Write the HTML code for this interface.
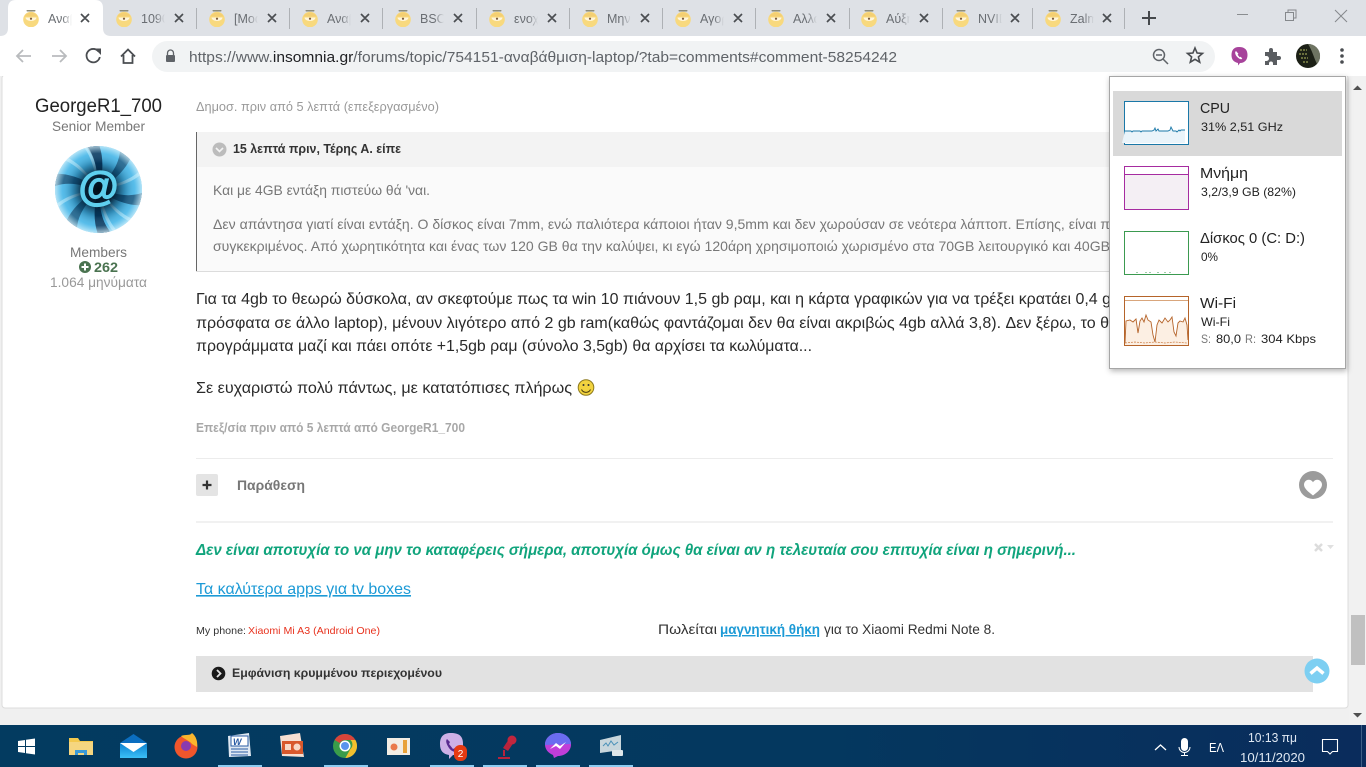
<!DOCTYPE html>
<html lang="el"><head><meta charset="utf-8"><title>Αναβάθμιση laptop</title>
<style>
html,body{margin:0;padding:0;width:1366px;height:767px;overflow:hidden;background:#fff}
svg{display:block;position:absolute;left:0;top:0}
text{font-family:"Liberation Sans","DejaVu Sans",sans-serif}
</style></head><body>
<svg width="1366" height="767" viewBox="0 0 1366 767" xmlns="http://www.w3.org/2000/svg">
<defs>
<symbol id="fav" viewBox="0 0 16 18"><circle cx="8" cy="10.500" r="7.800" fill="#f8d97e"/><path d="M1.500 7.500a7 6 0 0 1 13 0z" fill="#f4cf72"/><rect x="3.500" y="1" width="9" height="1.500" rx=".7" fill="#8d8d7c"/><path d="M2.500 8.500h11a5.500 3.500 0 0 1-11 0z" fill="#fff6dc"/><circle cx="8" cy="9.700" r="1.100" fill="#7a5a3a"/></symbol>
<linearGradient id="fd"><stop offset="0" stop-color="#dee1e6" stop-opacity="0"/><stop offset="1" stop-color="#dee1e6"/></linearGradient>
<linearGradient id="fw"><stop offset="0" stop-color="#fff" stop-opacity="0"/><stop offset="1" stop-color="#fff"/></linearGradient>
<linearGradient id="tb" x1="0" x2="1" y1="0" y2="0"><stop offset="0" stop-color="#033b60"/><stop offset=".6" stop-color="#04385f"/><stop offset="1" stop-color="#0a2c5c"/></linearGradient>
<linearGradient id="mail" x1="0" x2="0" y1="0" y2="1"><stop offset="0" stop-color="#0a7fd0"/><stop offset="1" stop-color="#3cc0f8"/></linearGradient>
<radialGradient id="avc"><stop offset="0" stop-color="#010c16"/><stop offset=".34" stop-color="#031c30" stop-opacity=".95"/><stop offset=".6" stop-color="#06324f" stop-opacity=".3"/><stop offset=".82" stop-color="#bfeeff" stop-opacity=".15"/><stop offset="1" stop-color="#e6f9ff" stop-opacity=".75"/></radialGradient>
<clipPath id="avclip"><circle cx="98.500" cy="189.500" r="43.500"/></clipPath>
<path id="arm" d="M0 0C12 -8 30 -14 36 -36L48 -28C38 -10 16 -2 0 0z"/>
<path id="str" d="M6 -3C18 -9 36 -18 44 -36L47 -34C38 -15 20 -6 6 -3z"/>
</defs>

<!-- page background -->
<rect width="1366" height="767" fill="#f0f0f0"/>
<rect x="2" y="75" width="1346" height="633" rx="3" fill="#fff" stroke="#dcdcdc"/>

<!-- chrome tab strip -->
<rect width="1366" height="36" fill="#dee1e6"/>
<rect y="36" width="1366" height="40" fill="#fff"/>
<path d="M0 36q8 0 8-8V8q0-8 8-8h79q8 0 8 8v20q0 8 8 8z" fill="#fff"/>
<g fill="#aeb1b5"><rect x="196" y="8" width="1" height="21"/><rect x="289" y="8" width="1" height="21"/><rect x="382" y="8" width="1" height="21"/><rect x="476" y="8" width="1" height="21"/><rect x="569" y="8" width="1" height="21"/><rect x="662" y="8" width="1" height="21"/><rect x="755" y="8" width="1" height="21"/><rect x="849" y="8" width="1" height="21"/><rect x="942" y="8" width="1" height="21"/><rect x="1032" y="8" width="1" height="21"/><rect x="1124" y="8" width="1" height="21"/></g>
<g font-size="12.500" fill="#6a6e73">
<text x="48" y="23">Αναβ</text><text x="141" y="23">1090</text><text x="234" y="23">[Mod</text><text x="327" y="23">Αναβ</text><text x="420" y="23">BSOD</text><text x="514" y="23">ενοχλ</text><text x="607" y="23">Μηνύ</text><text x="700" y="23">Αγορ</text><text x="793" y="23">Αλλαγ</text><text x="886" y="23">Αύξησ</text><text x="978" y="23">NVIDI</text><text x="1070" y="23">Zalma</text>
</g>
<rect x="62" y="8" width="10" height="22" fill="url(#fw)"/><rect x="72" y="8" width="22" height="22" fill="#fff"/>
<g fill="#dee1e6"><rect x="165" y="8" width="22" height="22"/><rect x="258" y="8" width="22" height="22"/><rect x="351" y="8" width="22" height="22"/><rect x="444" y="8" width="22" height="22"/><rect x="538" y="8" width="22" height="22"/><rect x="631" y="8" width="22" height="22"/><rect x="724" y="8" width="22" height="22"/><rect x="817" y="8" width="22" height="22"/><rect x="910" y="8" width="22" height="22"/><rect x="1002" y="8" width="22" height="22"/><rect x="1094" y="8" width="22" height="22"/></g>
<g fill="url(#fd)"><rect x="155" y="8" width="10" height="22"/><rect x="248" y="8" width="10" height="22"/><rect x="341" y="8" width="10" height="22"/><rect x="434" y="8" width="10" height="22"/><rect x="528" y="8" width="10" height="22"/><rect x="621" y="8" width="10" height="22"/><rect x="714" y="8" width="10" height="22"/><rect x="807" y="8" width="10" height="22"/><rect x="900" y="8" width="10" height="22"/><rect x="992" y="8" width="10" height="22"/><rect x="1084" y="8" width="10" height="22"/></g>
<use href="#fav" x="23" y="9" width="16" height="18"/><use href="#fav" x="116" y="9" width="16" height="18"/><use href="#fav" x="209" y="9" width="16" height="18"/><use href="#fav" x="302" y="9" width="16" height="18"/><use href="#fav" x="395" y="9" width="16" height="18"/><use href="#fav" x="489" y="9" width="16" height="18"/><use href="#fav" x="582" y="9" width="16" height="18"/><use href="#fav" x="675" y="9" width="16" height="18"/><use href="#fav" x="768" y="9" width="16" height="18"/><use href="#fav" x="861" y="9" width="16" height="18"/><use href="#fav" x="953" y="9" width="16" height="18"/><use href="#fav" x="1045" y="9" width="16" height="18"/>
<g stroke="#4a4d51" stroke-width="1.700" fill="none">
<path d="M81 14l8 8m0-8l-8 8M175 14l8 8m0-8l-8 8M268 14l8 8m0-8l-8 8M361 14l8 8m0-8l-8 8M454 14l8 8m0-8l-8 8M548 14l8 8m0-8l-8 8M641 14l8 8m0-8l-8 8M734 14l8 8m0-8l-8 8M827 14l8 8m0-8l-8 8M920 14l8 8m0-8l-8 8M1011 14l8 8m0-8l-8 8M1103 14l8 8m0-8l-8 8"/>
</g>
<path d="M1149 11v14M1142 18h14" stroke="#45484c" stroke-width="2" fill="none"/>
<path d="M1237 14.500h11" stroke="#8a8d90"/>
<g fill="none" stroke="#85888c"><rect x="1285.500" y="12.500" width="8" height="8"/><path d="M1288 12.500v-2.500h8v8h-2.500"/><path d="M1335 10l12 12m0-12l-12 12"/></g>

<!-- toolbar -->
<g fill="none" stroke-width="1.800">
<path d="M31 56H17M23 50l-6 6 6 6" stroke="#b9bbbe"/><path d="M52 56h14M60 50l6 6-6 6" stroke="#b9bbbe"/>
<path d="M98.500 51.500a6.700 6.700 0 1 0 1.300 5.500" stroke="#4a4d51"/>
<path d="M121 56.500l7-7 7 7M123.500 55v8h9v-8" stroke="#4a4d51"/>
</g>
<path d="M94.500 48.500h6.500v6.500z" fill="#4a4d51"/>
<rect x="152" y="41" width="1063" height="31" rx="15.500" fill="#f1f3f4"/>
<path d="M167.500 55v-2a3 3 0 0 1 6 0v2" fill="none" stroke="#5f6368" stroke-width="1.300"/><rect x="166" y="55" width="9" height="7" rx="1" fill="#5f6368"/>
<text x="189" y="62" font-size="14.500" fill="#5f6368" textLength="708" lengthAdjust="spacingAndGlyphs">https://www.<tspan fill="#202124">insomnia.gr</tspan>/forums/topic/754151-αναβάθμιση-laptop/?tab=comments#comment-58254242</text>
<g fill="none" stroke="#5f6368" stroke-width="1.500"><circle cx="1159" cy="55" r="5.500"/><path d="M1163 59l5 5M1156 55h6"/></g>
<path d="M1195 48l2.100 5 5.400.4-4.100 3.500 1.300 5.300-4.700-2.900-4.700 2.900 1.300-5.300-4.100-3.500 5.400-.4z" fill="none" stroke="#4a4d51" stroke-width="1.600"/>
<path d="M1239 47c6 0 8.500 3 8.500 8s-3 8-7.500 8l-2 2.500v-2.500c-4-1-6.500-3-6.500-8s2.500-8 7.500-8z" fill="#a7439b"/><path d="M1236 51c-1.500 1-.8 3.500.8 5.500s4 3.500 5.500 2.300l-1.500-2-1.200.5-2-2.500.8-1z" fill="#fff"/>
<path d="M1265 52h4v-2a2 2 0 0 1 4 0v2h4v4h2a2 2 0 0 1 0 4h-2v5h-4v-1.500a2 2 0 0 0-4 0V65h-4v-4h1.500a2.500 2.500 0 0 0 0-5H1265z" fill="#5a5d61"/>
<circle cx="1308" cy="56" r="12" fill="#1c2016"/><path d="M1308 44a12 12 0 0 1 9 20c-3-6-5-14-9-20z" fill="#6e7462"/><path d="M1300 50h7M1299 54h9M1301 58h7M1303 62h5" stroke="#b6bb62" stroke-width="1" stroke-dasharray="2 1"/>
<g fill="#4a4d51"><circle cx="1342" cy="50" r="1.800"/><circle cx="1342" cy="56" r="1.800"/><circle cx="1342" cy="62" r="1.800"/></g>

<!-- left user column -->
<text x="35" y="112" font-size="19" fill="#222" textLength="127" lengthAdjust="spacingAndGlyphs">GeorgeR1_700</text>
<text x="52" y="131" font-size="14" fill="#777" textLength="93" lengthAdjust="spacingAndGlyphs">Senior Member</text>
<g clip-path="url(#avclip)">
<rect x="55" y="146" width="87" height="87" fill="#45b4e6"/>
<g transform="translate(98.500 189.500)" fill="#06345a">
<use href="#arm" transform="rotate(-65)"/><use href="#arm" transform="rotate(-20)" opacity=".7"/><use href="#arm" transform="rotate(45)" opacity=".75"/><use href="#arm" transform="rotate(115)"/><use href="#arm" transform="rotate(160)" opacity=".7"/><use href="#arm" transform="rotate(225)" opacity=".75"/>
</g>
<g transform="translate(98.500 189.500)" fill="#c6eefb" opacity=".55">
<use href="#str" transform="rotate(10)"/><use href="#str" transform="rotate(75)"/><use href="#str" transform="rotate(100)"/><use href="#str" transform="rotate(190)"/><use href="#str" transform="rotate(255)"/><use href="#str" transform="rotate(285)"/>
</g>
<circle cx="98.500" cy="189.500" r="44" fill="url(#avc)"/>
</g>
<text x="98.500" y="200" font-size="41" font-weight="bold" text-anchor="middle" fill="#5fcfee" stroke="#5fcfee" stroke-width="1.200">@</text>
<text x="70" y="257" font-size="14" fill="#777" textLength="57" lengthAdjust="spacingAndGlyphs">Members</text>
<circle cx="85" cy="267" r="6" fill="#4a7350"/><path d="M85 263.500v7M81.500 267h7" stroke="#fff" stroke-width="2"/>
<text x="94" y="272" font-size="13.500" font-weight="bold" fill="#4a7350" textLength="24" lengthAdjust="spacingAndGlyphs">262</text>
<text x="50" y="287" font-size="14" fill="#999" textLength="97" lengthAdjust="spacingAndGlyphs">1.064 μηνύματα</text>

<!-- post -->
<text x="196" y="111" font-size="13" fill="#9a9a9a" textLength="243" lengthAdjust="spacingAndGlyphs">Δημοσ. πριν από 5 λεπτά (επεξεργασμένο)</text>
<rect x="196" y="132" width="1137" height="139" fill="#fafafa"/>
<rect x="196" y="132" width="1137" height="35" fill="#f3f3f3"/>
<rect x="196" y="132" width="1" height="140" fill="#666"/>
<rect x="196" y="271" width="1137" height="1" fill="#dcdcdc"/>
<circle cx="219.500" cy="149.500" r="7" fill="#bcbcbc"/><path d="M216 148l3.500 3.500 3.500-3.500" fill="none" stroke="#f3f3f3" stroke-width="1.600"/>
<text x="233" y="153" font-size="12.500" font-weight="bold" fill="#333" textLength="168" lengthAdjust="spacingAndGlyphs">15 λεπτά πριν, Τέρης Α. είπε</text>
<text x="213" y="195" font-size="14" fill="#777" textLength="217" lengthAdjust="spacingAndGlyphs">Και με 4GB εντάξη πιστεύω θά 'ναι.</text>
<text x="213" y="229" font-size="14" fill="#777" textLength="897" lengthAdjust="spacingAndGlyphs">Δεν απάντησα γιατί είναι εντάξη. Ο δίσκος είναι 7mm, ενώ παλιότερα κάποιοι ήταν 9,5mm και δεν χωρούσαν σε νεότερα λάπτοπ. Επίσης, είναι π</text>
<text x="213" y="251" font-size="14" fill="#777" textLength="897" lengthAdjust="spacingAndGlyphs">συγκεκριμένος. Από χωρητικότητα και ένας των 120 GB θα την καλύψει, κι εγώ 120άρη χρησιμοποιώ χωρισμένο στα 70GB λειτουργικό και 40GB</text>
<text x="196" y="304" font-size="16" fill="#2a2a2a" textLength="915" lengthAdjust="spacingAndGlyphs">Για τα 4gb το θεωρώ δύσκολα, αν σκεφτούμε πως τα win 10 πιάνουν 1,5 gb ραμ, και η κάρτα γραφικών για να τρέξει κρατάει 0,4 g</text>
<text x="196" y="328" font-size="16" fill="#2a2a2a" textLength="913" lengthAdjust="spacingAndGlyphs">πρόσφατα σε άλλο laptop), μένουν λιγότερο από 2 gb ram(καθώς φαντάζομαι δεν θα είναι ακριβώς 4gb αλλά 3,8). Δεν ξέρω, το θ</text>
<text x="196" y="351" font-size="16" fill="#2a2a2a" textLength="616" lengthAdjust="spacingAndGlyphs">προγράμματα μαζί και πάει οπότε +1,5gb ραμ (σύνολο 3,5gb) θα αρχίσει τα κωλύματα...</text>
<text x="196" y="393" font-size="16" fill="#2a2a2a" textLength="376" lengthAdjust="spacingAndGlyphs">Σε ευχαριστώ πολύ πάντως, με κατατόπισες πλήρως</text>
<circle cx="586" cy="387.500" r="7.800" fill="#f2d33f" stroke="#8d7a1e"/><circle cx="583.500" cy="385" r="1" fill="#333"/><circle cx="588.500" cy="385" r="1" fill="#333"/><path d="M581.500 389.500a5 5 0 0 0 9 0" fill="none" stroke="#4a3c10"/>
<text x="196" y="432" font-size="12.500" font-weight="bold" fill="#a8a8a8" textLength="269" lengthAdjust="spacingAndGlyphs">Επεξ/σία πριν από 5 λεπτά από GeorgeR1_700</text>
<rect x="196" y="458" width="1137" height="1" fill="#ececec"/>
<rect x="196" y="474" width="22" height="22" rx="2" fill="#e4e4e4"/><path d="M207 480.500v9M202.500 485h9" stroke="#333" stroke-width="2.200"/>
<text x="237" y="490" font-size="14" font-weight="bold" fill="#777" textLength="68" lengthAdjust="spacingAndGlyphs">Παράθεση</text>
<circle cx="1313" cy="485" r="14" fill="#9b9b9b"/><path d="M1313 495.500c-5-4-9-7-9-11a4.800 4.800 0 0 1 9-2.300 4.800 4.800 0 0 1 9 2.300c0 4-4 7-9 11z" fill="#fff"/>
<rect x="196" y="521" width="1137" height="2" fill="#f1f1f1"/>
<text x="196" y="555" font-size="15.500" font-weight="bold" font-style="italic" fill="#10a47c" textLength="880" lengthAdjust="spacingAndGlyphs">Δεν είναι αποτυχία το να μην το καταφέρεις σήμερα, αποτυχία όμως θα είναι αν η τελευταία σου επιτυχία είναι η σημερινή...</text>
<path d="M1315 544l7 7m0-7l-7 7" stroke="#dcdcdc" stroke-width="2.500"/><path d="M1327 545h7l-3.500 4z" fill="#e0e0e0"/>
<text x="196" y="594" font-size="16" fill="#1c9ad6" text-decoration="underline" textLength="215" lengthAdjust="spacingAndGlyphs">Τα καλύτερα apps για tv boxes</text>
<text x="196" y="634" font-size="10.500" fill="#333" textLength="50" lengthAdjust="spacingAndGlyphs">My phone:</text>
<text x="248" y="634" font-size="10.500" fill="#e8321e" textLength="132" lengthAdjust="spacingAndGlyphs">Xiaomi Mi A3 (Android One)</text>
<text x="658" y="634" font-size="14" fill="#333" textLength="59" lengthAdjust="spacingAndGlyphs">Πωλείται</text>
<text x="720" y="634" font-size="14" font-weight="bold" fill="#1c9ad6" text-decoration="underline" textLength="100" lengthAdjust="spacingAndGlyphs">μαγνητική θήκη</text>
<text x="824" y="634" font-size="14" fill="#333" textLength="171" lengthAdjust="spacingAndGlyphs">για το Xiaomi Redmi Note 8.</text>
<rect x="196" y="656" width="1117" height="36" fill="#e2e2e2"/>
<circle cx="218.500" cy="673.500" r="6.800" fill="#1a1a1a"/><path d="M217 670l3.500 3.500-3.500 3.500" fill="none" stroke="#e2e2e2" stroke-width="1.800"/>
<text x="232" y="677" font-size="12" font-weight="bold" fill="#333" textLength="210" lengthAdjust="spacingAndGlyphs">Εμφάνιση κρυμμένου περιεχομένου</text>
<circle cx="1317" cy="671" r="12.500" fill="#7dcff2"/><path d="M1310.500 673.500l6.500-5.500 6.500 5.500" fill="none" stroke="#fff" stroke-width="3.500"/>

<!-- scrollbar -->
<rect x="1349" y="76" width="17" height="649" fill="#f1f1f1"/>
<rect x="1351" y="615" width="14" height="50" fill="#c0c0c0"/>
<path d="M1353 90l4.500-4.500 4.500 4.500z M1353 713l4.500 4.500 4.500-4.500z" fill="#505050"/>

<!-- task manager popup -->
<rect x="1109.500" y="76.500" width="236" height="292" fill="#fff" stroke="#a6a6a6" style="filter:drop-shadow(1px 2px 3px rgba(0,0,0,.3))"/>
<rect x="1113" y="91" width="229" height="65" fill="#d9d9d9"/>
<rect x="1124.500" y="101.500" width="64" height="43" fill="#fff" stroke="#1a78a8"/>
<path d="M1125 131h6l1 1 1-1h7l1 1 1-1h10l2-1 1-2 1 3 2-2 1 2h9l2-1 1-3 2 4h3l1 1 2-2 1 1 1-1h4v13h-63z" fill="#eaf4fa"/>
<path d="M1125 131h6l1 1 1-1h7l1 1 1-1h10l2-1 1-2 1 3 2-2 1 2h9l2-1 1-3 2 4h3l1 1 2-2 1 1 1-1h4" fill="none" stroke="#1a78a8" stroke-width=".9"/>
<rect x="1124.500" y="166.500" width="64" height="43" fill="#f4eff4" stroke="#a62ba0"/>
<rect x="1125" y="167" width="63" height="8" fill="#fff"/><path d="M1125 174.500h63" stroke="#a62ba0"/>
<rect x="1124.500" y="231.500" width="64" height="43" fill="#fff" stroke="#3b9a50"/>
<path d="M1137 273v-1M1146 273v-1M1150 273v-1M1158 273v-1M1165 273v-1M1170 273v-1" stroke="#3b9a50"/>
<rect x="1124.500" y="296.500" width="64" height="49" fill="#fff" stroke="#b5642a"/>
<polygon points="1125,343 1126,321 1130,320 1133,322 1136,319 1138,333 1140,321 1142,318 1144,322 1146,315 1148,320 1151,322 1153,335 1155,342 1157,325 1159,320 1162,323 1165,318 1168,322 1170,320 1172,317 1174,332 1176,336 1178,323 1180,321 1183,322 1185,318 1187,325 1188,340 1188,345 1125,345" fill="#fcefe3"/>
<polyline points="1125,343 1126,321 1130,320 1133,322 1136,319 1138,333 1140,321 1142,318 1144,322 1146,315 1148,320 1151,322 1153,335 1155,342 1157,325 1159,320 1162,323 1165,318 1168,322 1170,320 1172,317 1174,332 1176,336 1178,323 1180,321 1183,322 1185,318 1187,325 1188,340" fill="none" stroke="#b5642a" stroke-width=".9"/>
<path d="M1125 300.500h63" stroke="#d9a67c"/>
<path d="M1125 343l10-1 10 1 10-1 10 1 10-1 12 1" fill="none" stroke="#c97a40" stroke-width=".7" stroke-dasharray="2 1"/>
<g fill="#222">
<text x="1200" y="113" font-size="15" textLength="30" lengthAdjust="spacingAndGlyphs">CPU</text>
<text x="1201" y="131" font-size="12" textLength="82" lengthAdjust="spacingAndGlyphs">31%  2,51 GHz</text>
<text x="1200" y="178" font-size="15" textLength="48" lengthAdjust="spacingAndGlyphs">Μνήμη</text>
<text x="1201" y="196" font-size="12" textLength="95" lengthAdjust="spacingAndGlyphs">3,2/3,9 GB (82%)</text>
<text x="1200" y="243" font-size="15" textLength="105" lengthAdjust="spacingAndGlyphs">Δίσκος 0 (C: D:)</text>
<text x="1201" y="261" font-size="12" textLength="17" lengthAdjust="spacingAndGlyphs">0%</text>
<text x="1200" y="308" font-size="15" textLength="36" lengthAdjust="spacingAndGlyphs">Wi-Fi</text>
<text x="1201" y="326" font-size="12" textLength="29" lengthAdjust="spacingAndGlyphs">Wi-Fi</text>
<text x="1201" y="343" font-size="12" fill="#777" textLength="10" lengthAdjust="spacingAndGlyphs">S:</text>
<text x="1216" y="343" font-size="12" textLength="25" lengthAdjust="spacingAndGlyphs">80,0</text>
<text x="1245" y="343" font-size="12" fill="#777" textLength="11" lengthAdjust="spacingAndGlyphs">R:</text>
<text x="1261" y="343" font-size="12" textLength="55" lengthAdjust="spacingAndGlyphs">304 Kbps</text>
</g>

<!-- taskbar -->
<rect y="725" width="1366" height="42" fill="url(#tb)"/>
<g fill="#8ecdf2"><rect x="218" y="765" width="44" height="2"/><rect x="324" y="765" width="44" height="2"/><rect x="430" y="765" width="44" height="2"/><rect x="483" y="765" width="44" height="2"/><rect x="536" y="765" width="44" height="2"/><rect x="589" y="765" width="44" height="2"/></g>
<path d="M18 741l7-1v6h-7zM26 739.800l9-1.300V746h-9zM18 747h7v6l-7-1zM26 747h9v7.500l-9-1.300z" fill="#fff"/>
<!-- folder -->
<path d="M69 741v-3h9l2 3h13v14H69z" fill="#f3c94e"/><rect x="69" y="742" width="24" height="13" fill="#f5d680"/><path d="M75 755v-5h12v5h-3v-2h-6v2z" fill="#3a9ad8"/>
<!-- mail -->
<path d="M120 743l13.500-9 13.500 9z" fill="#0b6ec0"/><rect x="120" y="743" width="27" height="15" fill="url(#mail)"/><path d="M120 743h27l-13.500 9z" fill="#fff"/>
<!-- firefox -->
<circle cx="186" cy="747" r="11.500" fill="#f0562c"/><path d="M181 736c5-2 9 0 11-3 4 3 6 9 5 14l-5-3c-2-3-8-5-11-8z" fill="#fbb62d"/><circle cx="186" cy="746" r="5" fill="#8a3bb0"/>
<!-- word -->
<path d="M228 736l21-3 2 23-22 1z" fill="#dfe8f2"/><rect x="231" y="736" width="17" height="10" fill="#fff" stroke="#2a5ba4"/><text x="233" y="745" font-size="9" font-weight="bold" font-style="italic" fill="#2a5ba4">W</text><path d="M231 749h17M231 752h17M231 755h17" stroke="#2a5ba4"/>
<!-- ppt -->
<path d="M280 736l20-3 4 24-22-1z" fill="#f6dfd2"/><rect x="282" y="741" width="21" height="13" fill="#d8582c"/><circle cx="297" cy="747" r="3.500" fill="#f8d8c6"/><rect x="285" y="744" width="6" height="6" fill="#f8d8c6"/>
<!-- chrome -->
<circle cx="345" cy="746" r="12" fill="#3a9c4a"/><path d="M345 734a12 12 0 0 1 10.400 6H345a6 6 0 0 0-5.200 3l-5.200-3A12 12 0 0 1 345 734z" fill="#d8443a"/><path d="M355.400 740a12 12 0 0 1-10 18l5-9a6 6 0 0 0 0-9z" fill="#f2c02e"/><circle cx="345" cy="746" r="5.500" fill="#fff"/><circle cx="345" cy="746" r="4" fill="#5a94ee"/>
<!-- app -->
<rect x="387" y="738" width="23" height="17" fill="#f2ede4"/><circle cx="394" cy="747" r="3.500" fill="#ea7a4a"/><rect x="403" y="740" width="4" height="13" fill="#e8a23a"/>
<!-- viber -->
<path d="M451 733c8 0 12 3 12 11s-4 11-10 11l-4 4v-4c-6-1-9-4-9-11s3-11 11-11z" fill="#cdb0e6"/><path d="M447 739c-2 2 0 6 2 9s6 5 8 3l-2-3-2 1-4-5 1-2z" fill="#5a2b8f"/>
<rect x="454" y="745" width="13" height="16" rx="6" fill="#e63a12"/><text x="460.500" y="757" font-size="10" fill="#fff" text-anchor="middle">2</text>
<!-- mic -->
<path d="M503 748l6-9 5 3-6 9z" fill="#b8233c"/><circle cx="512" cy="740" r="4.500" fill="#c2263e"/><path d="M504 750v6M498 758h12" stroke="#b8233c" stroke-width="2"/>
<!-- messenger -->
<path d="M558 733c7 0 13 5 13 11.500s-6 11.500-13 11.500l-4 2-1-3c-5-2-8-6-8-10.500 0-6.500 6-11.500 13-11.500z" fill="#c03ed8"/><path d="M558 733c7 0 13 5 13 11l-26 1c0-7 6-12 13-12z" fill="#6a6cf0"/><path d="M550 749l6-6 4 3 6-4-6 7-4-3z" fill="#fff"/>
<!-- monitor -->
<path d="M600 740l21-5v15l-21 3z" fill="#c8d6dc"/><path d="M603 746l3-3 2 3 3-5 3 4 4-3" fill="none" stroke="#4a90b8"/><rect x="612" y="750" width="11" height="6" rx="1" fill="#dfe7ea"/>

<!-- tray -->
<path d="M1155 750l5.500-5 5.500 5" fill="none" stroke="#fff" stroke-width="1.300"/>
<rect x="1181" y="738" width="7" height="13" rx="3.500" fill="#fff"/><path d="M1179 747a5.500 5.500 0 0 0 11 0M1184.500 753v2M1181 755.500h7" fill="none" stroke="#fff"/>
<text x="1209" y="752" font-size="13" fill="#fff" textLength="15" lengthAdjust="spacingAndGlyphs">ΕΛ</text>
<text x="1248" y="742" font-size="13" fill="#dfe8f2" textLength="49" lengthAdjust="spacingAndGlyphs">10:13 πμ</text>
<text x="1240" y="762" font-size="13" fill="#dfe8f2" textLength="65" lengthAdjust="spacingAndGlyphs">10/11/2020</text>
<path d="M1322.500 739.500h15v12h-5l-2.500 2.500-2.500-2.500h-5z" fill="none" stroke="#fff" stroke-width="1.100"/>
<rect x="1361" y="725" width="1" height="42" fill="#3d5f86"/>
</svg>
</body></html>
